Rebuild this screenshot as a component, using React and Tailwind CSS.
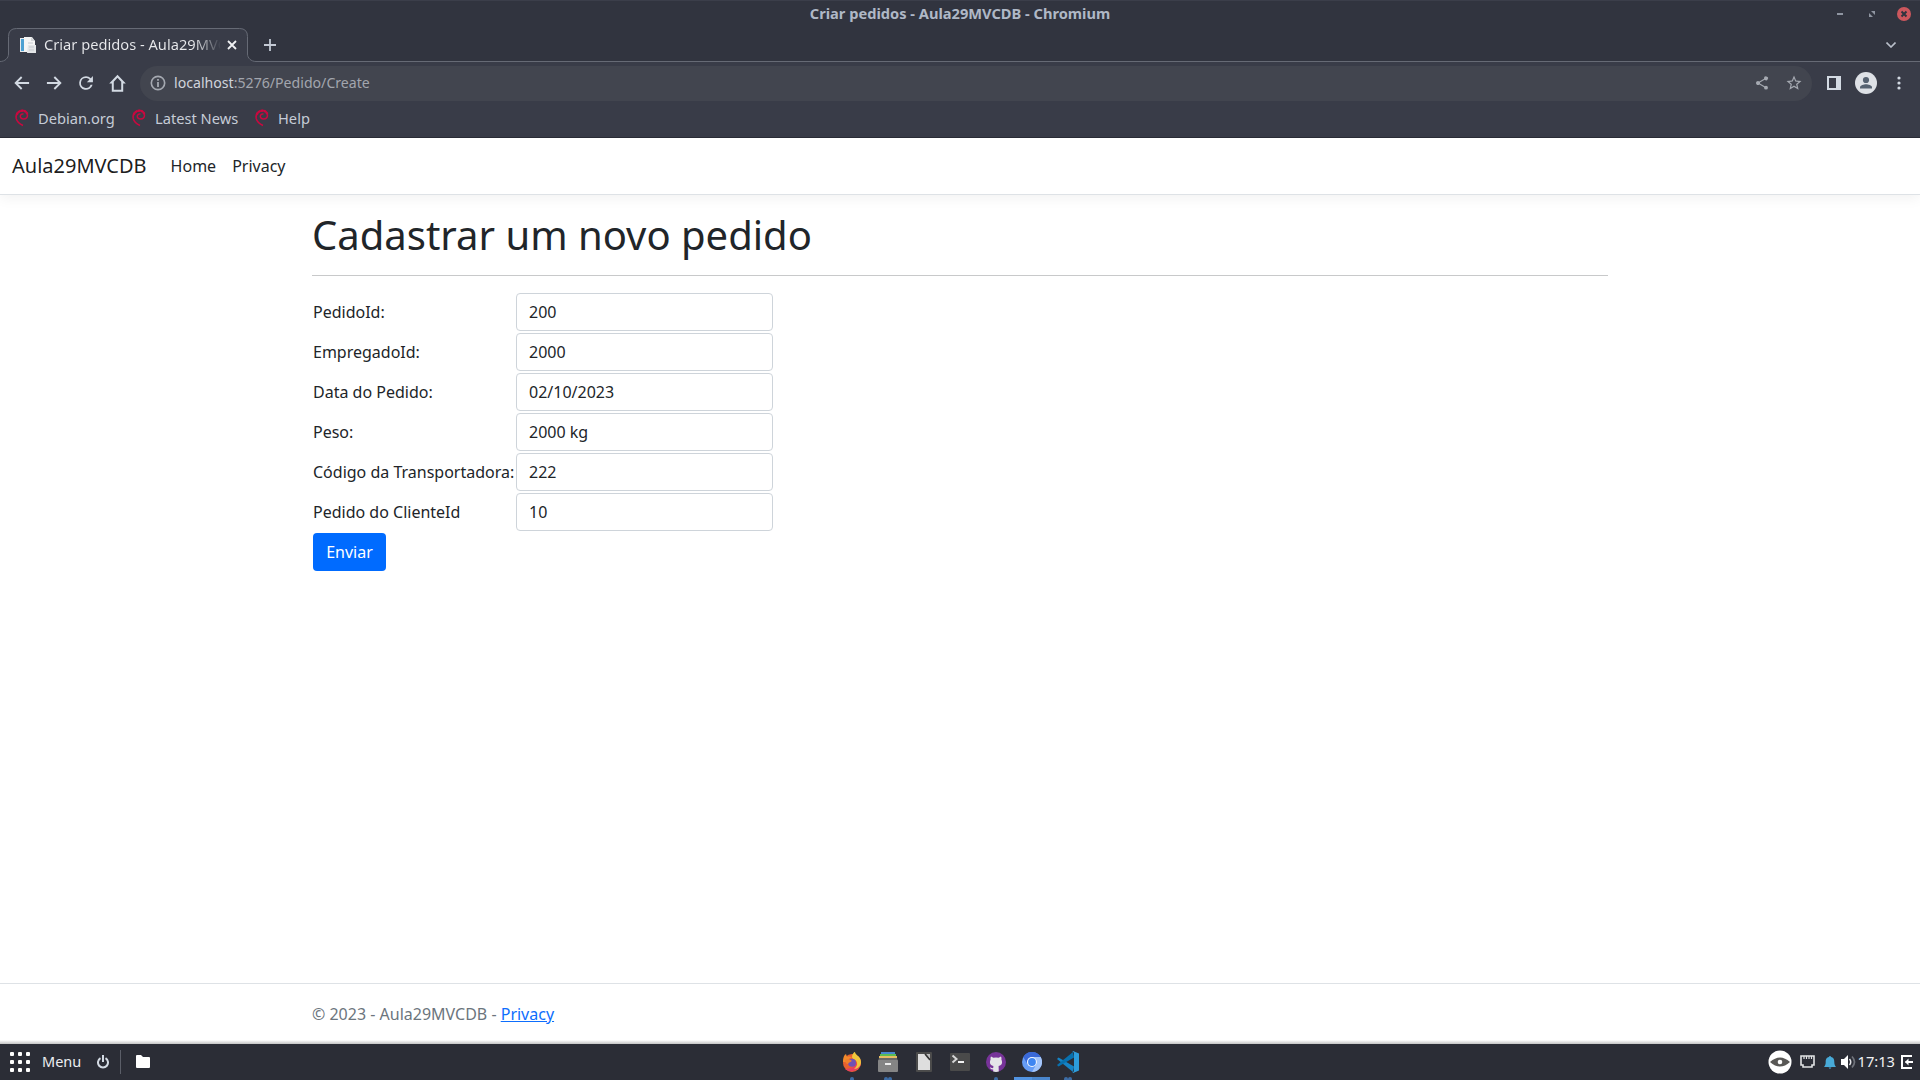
import React from "react";

const fields = [
  ["PedidoId:", "200"],
  ["EmpregadoId:", "2000"],
  ["Data do Pedido:", "02/10/2023"],
  ["Peso:", "2000 kg"],
  ["Código da Transportadora:", "222"],
  ["Pedido do ClienteId", "10"],
];

function Icon({ d, size = 20, className = "" }) {
  return (
    <svg width={size} height={size} viewBox="0 0 24 24" fill="currentColor" className={`shrink-0 ${className}`}>
      <path d={d} />
    </svg>
  );
}

const paths = {
  back: "M20.500 10.900H7.200l5.200-5.200L10.800 4l-8 8 8 8 1.600-1.600-5.200-5.200h13.300z",
  forward: "M13.200 4l-1.600 1.700 5.200 5.200H3.500v2.300h13.300l-5.200 5.200 1.600 1.600 8-8z",
  reload: "M17.800 6.200A8.200 8.200 0 0 0 12 3.800a8.200 8.200 0 1 0 7.900 10.400h-2.400A6 6 0 1 1 12 6c1.660 0 3.140.69 4.220 1.780L13 11h7.300V3.700z",
  home: "M12 1 L22.500 12 H19.200 V22.500 H4.800 V12 H1.500 Z M12 4.800 L7.300 9.800 V20 H16.700 V9.800 Z",
  info: "M10.800 6.500h2.400v2.500h-2.400zm0 4h2.400v6.800h-2.400zm1.200-8.500a10 10 0 1 0 0 20 10 10 0 0 0 0-20zm0 17.800a7.800 7.800 0 1 1 0-15.600 7.800 7.800 0 0 1 0 15.600z",
  share:
    "M18 16.080c-.76 0-1.440.3-1.960.77L8.910 12.700c.05-.23.09-.46.09-.7s-.04-.47-.09-.7l7.050-4.110A3 3 0 1 0 15 5c0 .24.04.47.09.7L8.040 9.810A3 3 0 1 0 8.040 14.190l7.120 4.160c-.05.21-.08.43-.08.65a2.920 2.920 0 1 0 2.920-2.920z",
  star: "M22 9.240l-7.190-.62L12 2 9.190 8.630 2 9.240l5.460 4.730L5.820 21 12 17.270 18.180 21l-1.630-7.030zM12 15.400l-3.760 2.270 1-4.280-3.320-2.880 4.380-.38L12 6.100l1.710 4.040 4.380.38-3.320 2.880 1 4.280z",
};

function DebianSwirl() {
  return (
    <svg width="16" height="18" viewBox="0 0 16 18" fill="none" stroke="#c9083f" className="mr-[8px] shrink-0">
      <path d="M9 16.500C5.500 15 3 12.500 2.200 9.500 1.500 6 3.500 2.300 7.500 1.700c3.500-.5 6 1.600 6 4.300 0 2.500-1.700 4-4 4-2 0-3.400-1.300-3.200-2.900.2-1.500 1.600-2.400 3.200-2" strokeWidth="1.500" />
      <path d="M2.600 6C3.500 3 6 1.500 8.500 1.700c2.600.2 4.300 1.500 4.700 3.500" strokeWidth="2.300" strokeDasharray="2.500 .5" />
    </svg>
  );
}

function TabStrip() {
  return (
    <div className="flex h-[62px] flex-col bg-[#31343f]">
      <div className="grid h-7 grid-cols-[1fr_auto_1fr] items-center border-t border-[#3b3e4a]">
        <span />
        <span className="-mt-[2px] text-[14.64px] leading-none font-bold whitespace-nowrap text-[#afb8c6]">
          Criar pedidos - Aula29MVCDB - Chromium
        </span>
        <div className="-mt-px flex items-center justify-end pr-[9px]">
          <i className="mr-[26px] h-[2px] w-[6px] bg-[#8f95a1]" />
          <svg width="6" height="6" viewBox="0 0 6 6" className="mr-[22px]" fill="#8f95a1">
            <path d="M2 0h4v4zM0 2l4 4H0z" />
          </svg>
          <svg width="14" height="14" viewBox="0 0 14 14">
            <circle cx="7" cy="7" r="7" fill="#cc575d" />
            <path d="M4.500 4.500l5 5m0-5l-5 5" stroke="#2f343f" strokeWidth="2" />
          </svg>
        </div>
      </div>
      <div className="flex h-[34px] items-end">
        <div className="relative flex h-[34px] w-[256px] shrink-0 items-center">
          <svg className="absolute left-0 top-0" width="256" height="34" viewBox="0 0 256 34">
            <path
              d="M0 33.500C5 33.500 8.500 30 8.500 26V8.500Q8.500.5 16.500.5H239.500Q247.500.5 247.500 8.500V26C247.500 30 251 33.500 256 33.500V34H0Z"
              fill="#393c48"
            />
            <path
              d="M0 33.500C5 33.500 8.500 30 8.500 26V8.500Q8.500.5 16.500.5H239.500Q247.500.5 247.500 8.500V26C247.500 30 251 33.500 256 33.500"
              fill="none"
              stroke="#666a75"
            />
          </svg>
          <div className="relative flex h-[34px] w-full items-center pb-0.5 pl-5">
            <svg width="16" height="16" viewBox="0 0 16 16" className="mt-px shrink-0">
              <path d="M0 1h5v14H0z" fill="#e8eaec" />
              <path d="M1 2h3v12H1z" fill="#4da0d2" />
              <path d="M4 0h8l3 4v11H4z" fill="#f5f5f5" />
              <path d="M11 0l4 4h-4z" fill="#d4d6d9" />
              <path d="M8 8h8v8H7z" fill="#e4e6e8" />
              <path d="M8 6h5M9 10h5M9 13h5" stroke="#c6cacf" />
            </svg>
            <span className="ml-[8px] w-[177px] overflow-hidden bg-linear-to-r from-[#e9eaed] from-85% to-transparent bg-clip-text text-[14.67px] leading-5 whitespace-nowrap text-transparent">
              Criar pedidos - Aula29MVCDB
            </span>
            <svg width="10" height="10" viewBox="0 0 10 10" className="mt-px ml-[6px]" stroke="#f0f1f3" strokeWidth="1.800">
              <path d="M1 1l8 8m0-8L1 9" />
            </svg>
          </div>
        </div>
        <div className="flex h-[34px] flex-1 items-center border-b border-[#666a75] pr-6 pl-2">
          <svg width="12" height="12" viewBox="0 0 12 12" stroke="#c3c9d4" strokeWidth="1.800">
            <path d="M6 0v12M0 6h12" />
          </svg>
          <svg width="10" height="6" viewBox="0 0 10 6" className="ml-auto" fill="none" stroke="#b9bfca" strokeWidth="1.600">
            <path d="M.5.5L5 5 9.500.5" />
          </svg>
        </div>
      </div>
    </div>
  );
}

function Toolbar() {
  return (
    <div className="flex h-[76px] flex-col border-b border-[#2a2c36] bg-[#393c48] text-[#d3dae3]">
      <div className="flex h-[42px] items-center pl-3">
        <Icon d={paths.back} />
        <Icon d={paths.forward} className="ml-3" />
        <Icon d={paths.reload} className="ml-3" />
        <Icon d={paths.home} size={19} className="ml-[12px]" />
        <div className="ml-[13px] flex h-[35px] w-[1672px] shrink-0 items-center rounded-full bg-[#42454f] pr-[9px] pl-[9px] text-[#a5a9b1]">
          <Icon d={paths.info} size={18} />
          <span className="ml-[7px] text-[14.14px] leading-5 whitespace-nowrap text-[#a2a6ae]">
            <span className="text-[#d0d4dc]">localhost</span>:5276/Pedido/Create
          </span>
          <Icon d={paths.share} size={16} className="ml-auto" />
          <Icon d={paths.star} size={18} className="ml-[15px]" />
        </div>
        <svg width="14" height="14" viewBox="0 0 14 14" className="ml-[15px] shrink-0">
          <path d="M0 0h14v14H0zM2 2v10h7V2z" fill="currentColor" fillRule="evenodd" />
        </svg>
        <svg width="22" height="22" viewBox="0 0 22 22" className="ml-[14px] shrink-0">
          <circle cx="11" cy="11" r="11" fill="#dee1e6" />
          <circle cx="11" cy="8" r="3.100" fill="#566271" />
          <path d="M5 16.500v-1.300c0-2 4-3 6-3s6 1 6 3v1.300z" fill="#566271" />
        </svg>
        <svg width="4" height="14" viewBox="0 0 4 14" className="ml-5 shrink-0" fill="currentColor">
          <circle cx="2" cy="2" r="1.600" />
          <circle cx="2" cy="7" r="1.600" />
          <circle cx="2" cy="12" r="1.600" />
        </svg>
      </div>
      <div className="flex h-[28px] items-center pl-[14px] text-[14.67px] leading-5 text-[#c6ccd7]">
        {[["Debian.org", "w-[117px]"], ["Latest News", "w-[123px]"], ["Help", "w-20"]].map(([label, width]) => (
          <span key={label} className={`flex items-center whitespace-nowrap ${width}`}>
            <DebianSwirl />
            <span className="-mt-px">{label}</span>
          </span>
        ))}
      </div>
    </div>
  );
}

function Page() {
  return (
    <div className="flex h-[906px] flex-col bg-white text-base leading-6 text-[#212529]">
      <nav className="flex h-[57px] shrink-0 items-center border-b border-[#dee2e6] px-3 shadow-[0_4px_12px_rgba(0,0,0,0.05)]">
        <span className="mr-4 text-xl leading-[30px] text-black/90">Aula29MVCDB</span>
        <a className="p-2">Home</a>
        <a className="p-2">Privacy</a>
      </nav>
      <main className="mx-auto mt-4 w-[1296px] flex-1">
        <h1 className="text-[40px] leading-[48px] font-normal">Cadastrar um novo pedido</h1>
        <hr className="my-4 border-t border-[#c8c9ca]" />
        <form className="grid w-[462px] grid-cols-[203px_257px] gap-y-0.5 p-px">
          {fields.map(([label, value]) => (
            <React.Fragment key={label}>
              <label className="flex h-[38px] items-center whitespace-nowrap">{label}</label>
              <input
                readOnly
                value={value}
                className="h-[38px] w-[257px] rounded-[4px] border border-[#ced4da] px-3 py-1.5 text-[#212529]"
              />
            </React.Fragment>
          ))}
          <button type="button" className="h-[38px] w-[73px] rounded-[4px] bg-[#006bff] text-center text-white">
            Enviar
          </button>
        </form>
      </main>
      <footer className="flex h-[61px] shrink-0 flex-col border-t border-[#dee2e6] text-[#6c757d]">
        <p className="mx-auto w-[1296px] flex-1 pt-[18px]">
          © 2023 - Aula29MVCDB - <a className="text-[#0d6efd] underline">Privacy</a>
        </p>
        <div className="h-1 bg-linear-to-b from-white to-[#c4c4c4]" />
      </footer>
    </div>
  );
}

function Firefox() {
  return (
    <svg width="20" height="20" viewBox="0 0 20 20">
      <circle cx="10" cy="11" r="9" fill="#e8602f" />
      <path d="M3 17a10 10 0 0 0 14-1c3-4 2-9-1-12 0 0 1 8-5 11-4 2-8 2-8 2z" fill="#e73f61" />
      <path d="M10 5C10 2 12 0 13 0c0 3 6 4 6 10 0 4-3 7-7 7 4-3 4-7 1-9-2-1-3-2-3-3z" fill="#efc63c" />
      <path d="M1 9c0-3 1-6 3-7l1 3c2-1 4 0 5 1-3 0-5 2-4 4H1z" fill="#f28a2b" />
      <circle cx="10" cy="10.800" r="4" fill="#7051b5" />
      <path d="M3 8c2-2 5-1 7 1-1 1-3 1-4 3-2 0-3-2-3-4z" fill="#f0802c" />
    </svg>
  );
}

function FileCabinet() {
  return (
    <svg width="20" height="20" viewBox="0 0 20 20">
      <path d="M3 0h14v3H3z" fill="#4787cf" />
      <path d="M2 2h16v3H2z" fill="#5cbc52" />
      <path d="M1 4h18v3H1z" fill="#e6bd62" />
      <path d="M1 6h18l1 3H0z" fill="#686868" />
      <rect y="8" width="20" height="12" rx="1" fill="#858585" />
      <path d="M7 11h6v2H7z" fill="#ededed" />
    </svg>
  );
}

function DocumentIcon() {
  return (
    <svg width="16" height="20" viewBox="0 0 16 20">
      <rect width="16" height="20" rx="1" fill="#4b4b4b" />
      <path d="M2 2h7l5 6v10H2z" fill="#dedede" />
      <path d="M10 2h4v5z" fill="#bdbdbd" />
      <path d="M9 2l5 6" stroke="#333" strokeWidth="1.500" />
    </svg>
  );
}

function TerminalIcon() {
  return (
    <svg width="20" height="18" viewBox="0 0 20 18">
      <rect width="20" height="18" rx="1" fill="#4a4a4a" />
      <path d="M2.500 2.500l4 3.500-4 3.500" fill="none" stroke="#d5d5d5" strokeWidth="2" />
      <path d="M8 8h6v2H8z" fill="#f2f2f2" />
    </svg>
  );
}

function GithubDesktop() {
  return (
    <svg width="20" height="20" viewBox="0 0 20 20">
      <circle cx="10" cy="10" r="10" fill="#773399" />
      <path
        d="M5 4.500l2.400 1.300q2.600-.7 5.200 0L15 4.500q.7 1.500.4 3c1.600 3.500.2 6-2.800 6.600l.2 5.400q-2.800.8-5.600 0v-2c-2 .3-2.500-.5-3.400-2.200 1.300 0 1.700 1.200 3.400.8l.2-2C4.400 13.500 3 11 4.600 7.500q-.3-1.500.4-3z"
        fill="#e5e5e8"
      />
    </svg>
  );
}

function Chromium() {
  return (
    <svg width="20" height="20" viewBox="0 0 20 20">
      <circle cx="10" cy="10" r="10" fill="#669df6" />
      <path d="M1.300 5A10 10 0 0 1 18.700 5H10a5 5 0 0 0-4.300 7.500z" fill="#3a69d8" />
      <path d="M18.700 5A10 10 0 0 1 10 20l4.300-7.500A5 5 0 0 0 10 5z" fill="#a4c5fa" />
      <circle cx="10" cy="10" r="5" fill="#f4f7fd" />
      <circle cx="10" cy="10" r="3.900" fill="#3f86f2" />
    </svg>
  );
}

function VsCode() {
  return (
    <svg width="22" height="22" viewBox="0 0 22 22">
      <path d="M1.500 6.500L0 8l16 13 1-5.500z" fill="#1684c6" />
      <path d="M1.500 15.500L0 14 16 1l1 5.500z" fill="#0870ae" />
      <path d="M16 0l6 2.500v17L16 22l-.5-.7q1.500-.2 1.500-1.300V2q0-1.100-1.500-1.300z" fill="#2d9cdb" />
    </svg>
  );
}

const apps = [
  [Firefox, 1],
  [FileCabinet, 2],
  [DocumentIcon, 0],
  [TerminalIcon, 0],
  [GithubDesktop, 1],
  [Chromium, "active"],
  [VsCode, 2],
];

function Taskbar() {
  return (
    <div className="grid h-9 grid-cols-[1fr_252px_1fr] bg-[#2b2d36] text-white">
      <div className="flex items-center pl-[10px]">
        <div className="grid grid-cols-3 gap-1">
          {Array.from({ length: 9 }, (_, i) => (
            <i key={i} className="size-1 rounded-[1px] bg-white" />
          ))}
        </div>
        <span className="-mt-[3px] ml-[12px] w-[55px] text-[14.5px] leading-5 text-[#eceef1]">Menu</span>
        <svg width="12" height="14" viewBox="0 0 12 14" fill="none" stroke="#d3dae3" strokeWidth="2">
          <path d="M3.500 3.200A5 5 0 1 0 8.500 3.200M6 0v7" />
        </svg>
        <i className="ml-[11px] h-6 w-px bg-[#5b5e68]" />
        <svg width="14" height="13" viewBox="0 0 14 13" className="-mt-px ml-[15px]" fill="#fff">
          <path d="M0 1q0-1 1-1h4l2 2h6q1 0 1 1v9q0 1-1 1H1q-1 0-1-1z" />
        </svg>
      </div>
      <div className="grid grid-cols-7">
        {apps.map(([App, mark], i) => (
          <div key={i} className="relative flex items-center justify-center">
            <App />
            <div className="absolute inset-x-0 bottom-0 flex justify-center">
              {mark === "active" ? (
                <>
                  <i className="h-[3px] w-[18px] bg-[#5294e2]" />
                  <i className="h-[3px] w-[18px] bg-[#4a86cd]" />
                </>
              ) : (
                Array.from({ length: mark }, (_, n) => <i key={n} className="h-[3px] w-1 rounded-t-full bg-[#3d6ca5]" />)
              )}
            </div>
          </div>
        ))}
      </div>
      <div className="flex items-center justify-end pr-[7px]">
        <svg width="24" height="24" viewBox="0 0 24 24">
          <circle cx="12" cy="12" r="11.500" fill="#fff" />
          <path d="M2 12q10-9 20 0-10 9-20 0z" fill="#595856" />
          <circle cx="12" cy="12" r="2.300" fill="#fff" />
        </svg>
        <svg width="15" height="13" viewBox="0 0 15 13" className="-mt-px ml-2" fill="none" stroke="#e2e3e5" strokeWidth="2">
          <path d="M1 1h13v9h-2v2H3v-2H1z" strokeWidth="1.600" />
          <path d="M4 1v3m2.500-3v3M9 1v3m2.500-3v3" strokeWidth="1.200" />
        </svg>
        <svg width="12" height="13" viewBox="0 0 12 13" className="ml-[9px]" fill="#48aad8">
          <path d="M6 0q1 0 1 1c3 .5 3.300 3 3.300 5 0 3 .7 3.500 1.700 5H0c1-1.500 1.700-2 1.700-5 0-2 .3-4.500 3.300-5q0-1 1-1zM4.500 11.500h3L6 13z" />
        </svg>
        <svg width="15" height="14" viewBox="0 0 15 14" className="ml-[5px]" fill="none">
          <path d="M0 4h3l4-4v14l-4-4H0z" fill="#fff" />
          <path d="M8.500 4q2.500 3 0 6" stroke="#e4e5e8" strokeWidth="1.500" />
          <path d="M11 1.500q5 5.500 0 11" stroke="#70737b" strokeWidth="1.700" />
        </svg>
        <span className="-mt-[3px] ml-[2px] text-[14.67px] leading-5 text-[#f0f1f3]">17:13</span>
        <svg width="12" height="14" viewBox="0 0 12 14" className="ml-[6px]" stroke="#fff" strokeWidth="2" fill="none">
          <path d="M11 1H1v12h10" />
          <path d="M4.500 7H12" />
          <path d="M7.500 3.500v7L4 7z" fill="#fff" stroke="none" />
        </svg>
      </div>
    </div>
  );
}

export default function App() {
  return (
    <div className="h-[1080px] w-[1920px] overflow-hidden font-['Noto_Sans',sans-serif]">
      <TabStrip />
      <Toolbar />
      <Page />
      <Taskbar />
    </div>
  );
}
